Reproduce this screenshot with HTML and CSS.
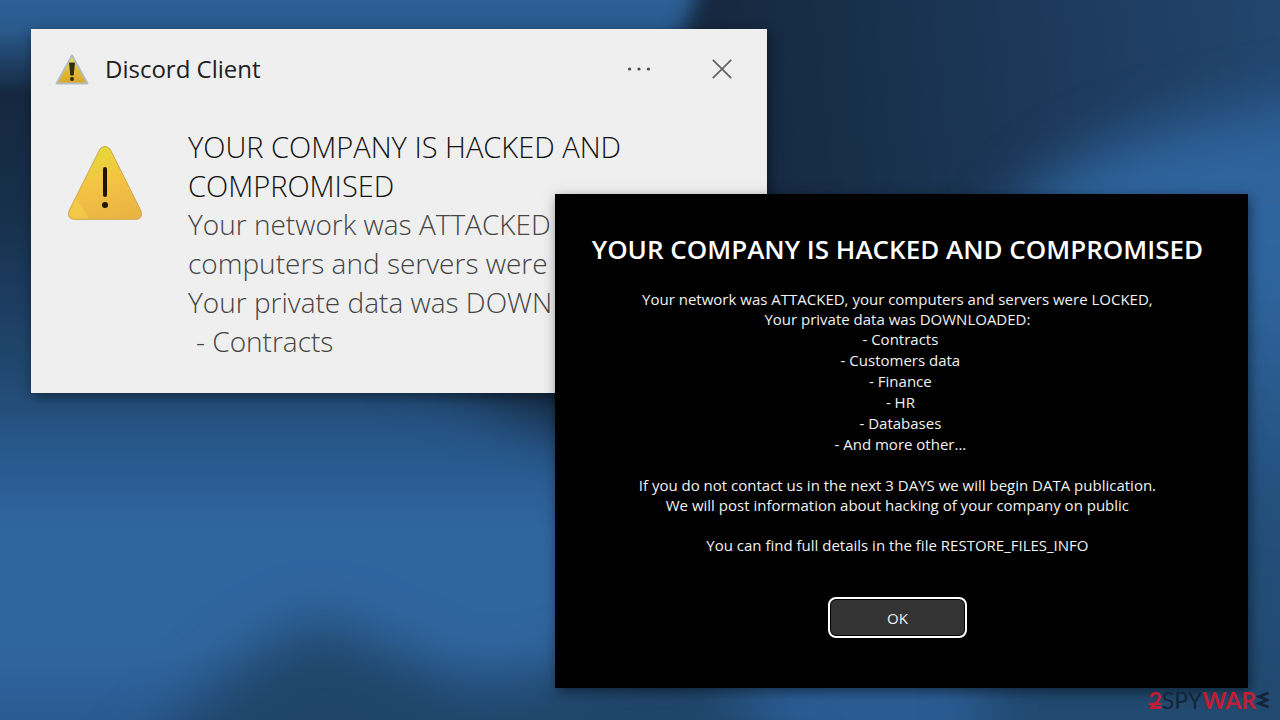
FILE: index.html
```
<!DOCTYPE html>
<html lang="en">
<head>
<meta charset="utf-8">
<title>Discord Client</title>
<link rel="stylesheet" href="styles.css">
</head>
<body>
<main class="desktop">
  <svg class="wallpaper" viewBox="0 0 1280 720" preserveAspectRatio="none" aria-hidden="true">
    <defs>
      <linearGradient id="base" x1="0" y1="0" x2="0" y2="1">
        <stop offset="0" stop-color="#2c6096"/>
        <stop offset="0.04" stop-color="#2a5a8d"/>
        <stop offset="0.13" stop-color="#15283f"/>
        <stop offset="0.3" stop-color="#17304c"/>
        <stop offset="0.54" stop-color="#224a74"/>
        <stop offset="0.62" stop-color="#27578a"/>
        <stop offset="0.74" stop-color="#2f66a0"/>
        <stop offset="0.9" stop-color="#30669f"/>
        <stop offset="1" stop-color="#2a5b92"/>
      </linearGradient>
      <linearGradient id="night" gradientUnits="userSpaceOnUse" x1="720" y1="60" x2="1280" y2="0">
        <stop offset="0" stop-color="#15283f"/>
        <stop offset="1" stop-color="#22466f"/>
      </linearGradient>
      <linearGradient id="glow" gradientUnits="userSpaceOnUse" x1="0" y1="100" x2="0" y2="720">
        <stop offset="0" stop-color="#2d6097"/>
        <stop offset="0.25" stop-color="#3067a1"/>
        <stop offset="0.65" stop-color="#24507d"/>
        <stop offset="1" stop-color="#22496f"/>
      </linearGradient>
      <filter id="soft" color-interpolation-filters="sRGB" x="-50%" y="-50%" width="200%" height="200%"><feGaussianBlur stdDeviation="28"/></filter>
      <filter id="edge" color-interpolation-filters="sRGB" x="-50%" y="-50%" width="200%" height="200%"><feGaussianBlur stdDeviation="10"/></filter>
    </defs>
    <rect width="1280" height="720" fill="url(#base)"/>
    <path d="M710 -80 C700 40 640 120 560 220 L560 400 L1400 400 L1400 -80 Z" fill="url(#night)" filter="url(#edge)"/>
    <path d="M1000 230 C1070 140 1170 110 1480 80 L1480 860 L980 860 Z" fill="url(#glow)" filter="url(#soft)"/>
    <path d="M400 350 L760 330 L760 430 L560 430 Z" fill="#15283f" filter="url(#soft)"/>
    <path d="M320 620 C250 650 190 700 120 790 L850 850 L700 640 L480 690 Z" fill="#204569" filter="url(#soft)"/>
  </svg>

  <section class="toast" aria-label="Discord Client">
    <header class="toast-bar">
      <svg class="toast-icon" viewBox="0 0 34 32" aria-hidden="true">
        <defs>
          <linearGradient id="small" x1="0" y1="0" x2="0" y2="1">
            <stop offset="0" stop-color="#e9ee5c"/>
            <stop offset="0.55" stop-color="#e2bd32"/>
            <stop offset="1" stop-color="#d9a52b"/>
          </linearGradient>
        </defs>
        <path d="M17 2.500 L32.500 30.500 H1.500 Z" fill="url(#small)" stroke="#b4bdbd" stroke-width="2" stroke-linejoin="round"/>
        <path d="M14.600 10 H19.400 L18.300 22 H15.700 Z" fill="#302c16" stroke="#302c16" stroke-linejoin="round"/>
        <circle cx="17" cy="26" r="2" fill="#302c16"/>
      </svg>
      <h2 class="toast-title">Discord Client</h2>
      <button class="bar-button" type="button" aria-label="More options">
        <svg viewBox="0 0 24 24" width="24" height="24"><g fill="#4c4c4c"><circle cx="2.600" cy="12" r="1.600"/><circle cx="12" cy="12" r="1.600"/><circle cx="21.400" cy="12" r="1.600"/></g></svg>
      </button>
      <button class="bar-button" type="button" aria-label="Close">
        <svg viewBox="0 0 24 24" width="24" height="24"><path d="M2.800 2.800 L21.200 21.200 M21.200 2.800 L2.800 21.200" stroke="#626262" stroke-width="1.700" fill="none"/></svg>
      </button>
    </header>
    <div class="toast-body">
      <svg class="warning" viewBox="0 0 74 74" aria-hidden="true">
        <defs>
          <linearGradient id="big" x1="0.3" y1="0" x2="0.6" y2="1">
            <stop offset="0" stop-color="#e3dc35"/>
            <stop offset="0.5" stop-color="#f4c443"/>
            <stop offset="1" stop-color="#e9b545"/>
          </linearGradient>
        </defs>
        <path d="M32 3 Q37 -2 42 3 L73 65 Q75 73 68 73.300 H6 Q-1 73 1 65 Z" fill="url(#big)" stroke="#cfa54a"/>
        <path d="M8 52 L1.500 66 Q0 72 6 72.500 H21 Z" fill="#f5d04c" opacity="0.6"/>
        <path d="M37 23 V49" stroke="#1d1605" stroke-width="4" stroke-linecap="round"/>
        <circle cx="37" cy="59" r="3" fill="#1d1605"/>
      </svg>
      <div class="toast-text">
        <p class="toast-lead">YOUR COMPANY IS HACKED AND<br>COMPROMISED</p>
        <p>Your network was ATTACKED<br>computers and servers were<br>Your private data was DOWN</p>
        <p class="toast-item">- Contracts</p>
      </div>
    </div>
  </section>

  <section class="dialog" role="dialog" aria-labelledby="dialog-title">
    <h1 class="dialog-title" id="dialog-title">YOUR COMPANY IS HACKED AND COMPROMISED</h1>
    <div class="dialog-text">
      <p>Your network was ATTACKED, your computers and servers were LOCKED,<br>Your private data was DOWNLOADED:</p>
      <ul class="data-list">
        <li>- Contracts</li>
        <li>- Customers data</li>
        <li>- Finance</li>
        <li>- HR</li>
        <li>- Databases</li>
        <li>- And more other...</li>
      </ul>
      <p class="spaced">If you do not contact us in the next 3 DAYS we will begin DATA publication.<br>We will post information about hacking of your company on public</p>
      <p class="spaced">You can find full details in the file RESTORE_FILES_INFO</p>
    </div>
    <button class="ok" type="button">OK</button>
  </section>

  <div class="brand">
    <span class="brand-two">2</span><span class="brand-spy">SPY</span><span class="brand-war">WAR</span>
    <svg class="brand-mark" viewBox="0 0 13 18" aria-hidden="true"><path d="M12.500 2 L3 5.500 L11.500 9 L3 12.500 L12.500 16" fill="none" stroke="#142438" stroke-width="2.600"/></svg>
  </div>
</main>
</body>
</html>
```
FILE: styles.css
```
* { box-sizing: border-box; }

body {
  margin: 0;
  font-family: "Open Sans", "Noto Sans", sans-serif;
}

h1, h2, p, ul { margin: 0; padding: 0; }

button {
  font: inherit;
  padding: 0;
  cursor: pointer;
}

.desktop {
  position: relative;
  min-height: 100vh;
  overflow: hidden;
  background: #28598e;
}

.wallpaper {
  position: absolute;
  inset: 0;
  width: 100%;
  height: 100%;
}

.toast {
  position: absolute;
  top: 29px;
  left: 31px;
  width: 57.5%;
  padding: 24px 33px 32px 24px;
  background: #efefef;
  box-shadow: 2px 4px 12px rgba(0, 0, 0, 0.45);
}

.toast-bar {
  display: flex;
  align-items: center;
  height: 32px;
}

.toast-icon {
  width: 34px;
  height: 32px;
  margin-right: 16px;
}

.toast-title {
  flex: 1;
  color: #202020;
  font-size: 24px;
  font-weight: 400;
  line-height: 32px;
}

.bar-button {
  display: flex;
  margin-left: 59px;
  border: 0;
  background: none;
}

.toast-body {
  display: flex;
  gap: 46px;
  padding: 42px 0 0 13px;
}

.warning {
  flex: none;
  width: 74px;
  height: 74px;
  margin-top: 19px;
}

.toast-text {
  color: #444;
  font-size: 28px;
  font-weight: 300;
  line-height: 39px;
  white-space: nowrap;
}

.toast-lead {
  color: #111;
  font-size: 29px;
}

.toast-item { padding-left: 8px; }

.dialog {
  position: absolute;
  top: 194px;
  right: 32px;
  display: flex;
  flex-direction: column;
  align-items: center;
  width: calc(54% + 2px);
  padding: 35px 16px 50px 8px;
  color: #f2f2f2;
  background: #000;
  box-shadow: 2px 4px 12px rgba(0, 0, 0, 0.5);
  white-space: nowrap;
}

.dialog-title {
  color: #fff;
  font-size: 26px;
  font-weight: 600;
  line-height: 40px;
}

.dialog-text {
  padding-top: 20px;
  font-size: 15px;
  line-height: 20px;
  text-align: center;
}

.data-list {
  list-style: none;
  line-height: 21px;
}

.data-list li { padding-left: 6px; }

.spaced { padding-top: 20px; }

.ok {
  width: 139px;
  height: 41px;
  margin-top: 42px;
  color: #f2f2f2;
  font-size: 15px;
  background: #333;
  border: 2px solid #fff;
  border-radius: 8px;
  box-shadow: inset 0 0 0 1px #000;
}

.brand {
  position: absolute;
  right: 11px;
  bottom: 8px;
  display: flex;
  align-items: center;
  color: #142438;
  font-family: Lato, sans-serif;
  font-size: 23px;
  line-height: 24px;
}

.brand-two, .brand-war {
  color: #c31c2e;
  font-weight: 700;
}

.brand-two {
  text-decoration: underline;
  text-decoration-thickness: 2px;
  text-decoration-skip-ink: none;
  text-underline-offset: -6px;
}

.brand-spy { font-weight: 400; }

.brand-mark {
  width: 13px;
  height: 18px;
}
```
